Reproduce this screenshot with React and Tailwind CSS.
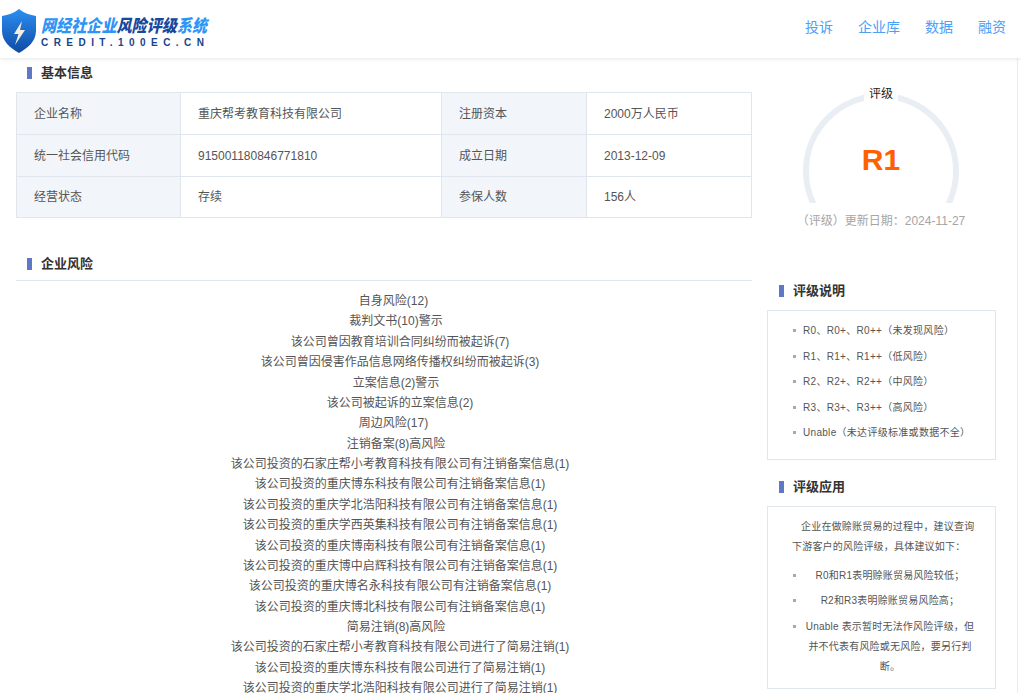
const FONT = "font-['Liberation_Sans','Noto_Sans_CJK_SC',sans-serif]";

const navLinks = ["投诉", "企业库", "数据", "融资"];

const basicInfo = [
  ["企业名称", "重庆帮考教育科技有限公司", "注册资本", "2000万人民币"],
  ["统一社会信用代码", "915001180846771810", "成立日期", "2013-12-09"],
  ["经营状态", "存续", "参保人数", "156人"],
];

const levelClass = ["pl-[19px]", "pl-[24px]", "pl-[32px]"];

const risks = [
  ["自身风险(12)", 0],
  ["裁判文书(10)警示", 1],
  ["该公司曾因教育培训合同纠纷而被起诉(7)", 2],
  ["该公司曾因侵害作品信息网络传播权纠纷而被起诉(3)", 2],
  ["立案信息(2)警示", 1],
  ["该公司被起诉的立案信息(2)", 2],
  ["周边风险(17)", 0],
  ["注销备案(8)高风险", 1],
  ["该公司投资的石家庄帮小考教育科技有限公司有注销备案信息(1)", 2],
  ["该公司投资的重庆博东科技有限公司有注销备案信息(1)", 2],
  ["该公司投资的重庆学北浩阳科技有限公司有注销备案信息(1)", 2],
  ["该公司投资的重庆学西英集科技有限公司有注销备案信息(1)", 2],
  ["该公司投资的重庆博南科技有限公司有注销备案信息(1)", 2],
  ["该公司投资的重庆博中启辉科技有限公司有注销备案信息(1)", 2],
  ["该公司投资的重庆博名永科技有限公司有注销备案信息(1)", 2],
  ["该公司投资的重庆博北科技有限公司有注销备案信息(1)", 2],
  ["简易注销(8)高风险", 1],
  ["该公司投资的石家庄帮小考教育科技有限公司进行了简易注销(1)", 2],
  ["该公司投资的重庆博东科技有限公司进行了简易注销(1)", 2],
  ["该公司投资的重庆学北浩阳科技有限公司进行了简易注销(1)", 2],
];

const grades = [
  "R0、R0+、R0++（未发现风险）",
  "R1、R1+、R1++（低风险）",
  "R2、R2+、R2++（中风险）",
  "R3、R3+、R3++（高风险）",
  "Unable（未达评级标准或数据不全）",
];

const SectionTitle = ({ children, className = "" }) => (
  <div className={`flex items-center gap-[9px] ${className}`}>
    <span className="w-[5px] h-[12px] bg-[#5f78c4]" />
    <h2 className="text-[13px] font-bold leading-[16px] text-[#333]">{children}</h2>
  </div>
);

const Logo = () => (
  <div className="mt-[9px] flex items-center gap-[4px]">
    <svg width="36" height="44" viewBox="0 0 36 44">
      <defs>
        <linearGradient id="shield" x1="0" y1="0" x2="0" y2="1">
          <stop offset="0" stopColor="#2b8ff0" />
          <stop offset="1" stopColor="#0f4aa5" />
        </linearGradient>
      </defs>
      <path d="M18 0 C23 4 29 6 35 7 V22 C35 32 27 39 18 44 C9 39 1 32 1 22 V7 C7 6 13 4 18 0 Z" fill="url(#shield)" />
      <path d="M21 12 L13 25 H17.5 L14 36 L24 21 H19 Z" fill="#f3eee0" />
    </svg>
    <div className="flex flex-col w-[170px] pt-[3px]">
      <div className="text-[15px] leading-[18px] font-black italic whitespace-nowrap tracking-[0.1px] scale-y-[1.15] text-[#2f95f5]">
        网经社企业<span className="text-[#17489c]">风险评级</span>系统
      </div>
      <div className="mt-[3px] text-[10px] leading-[10px] font-bold whitespace-nowrap tracking-[5.45px] text-[#17458c]">
        CREDIT.100EC.CN
      </div>
    </div>
  </div>
);

const Gauge = () => (
  <div className="flex flex-col items-center">
    <div className="relative w-[158px] h-[118px] overflow-hidden">
      <svg width="158" height="110" viewBox="0 0 158 110" className="absolute left-0 top-[8px]">
        <circle cx="79" cy="78" r="75" fill="none" stroke="#e9eef4" strokeWidth="6" />
      </svg>
      <span className="absolute left-1/2 top-[1px] -translate-x-1/2 bg-white px-[5px] text-[12px] leading-[17px] text-[#222]">
        评级
      </span>
      <span className="absolute left-0 right-0 top-[58px] text-center text-[30px] leading-[34px] font-bold text-[#ff6000]">
        R1
      </span>
    </div>
    <p className="mt-[10px] text-[12px] leading-[16px] text-[#a5a5a5] whitespace-nowrap">（评级）更新日期：2024-11-27</p>
  </div>
);

export default function App() {
  return (
    <div className={`h-[693px] overflow-hidden bg-white ${FONT}`}>
      <header className="h-[58px] flex items-start justify-between pl-[1px] pr-[15px] bg-white shadow-[0_1px_4px_rgba(0,0,0,0.1)] relative">
        <Logo />
        <nav className="mt-[17px] flex gap-[25px] text-[14px] leading-[20px] text-[#4ca0f5]">
          {navLinks.map((link) => (
            <a key={link} href="#">
              {link}
            </a>
          ))}
        </nav>
      </header>

      <main className="flex mr-[3px] h-[635px] border-r border-[#e9edf2]">
        <div className="w-[736px] ml-[16px] shrink-0">
          <SectionTitle className="mt-[7px] ml-[11px]">基本信息</SectionTitle>

          <table className="mt-[11px] w-full table-fixed border-collapse text-[12px] text-[#555]">
            <colgroup>
              <col className="w-[164px]" />
              <col className="w-[261px]" />
              <col className="w-[145px]" />
              <col />
            </colgroup>
            <tbody>
              {basicInfo.map(([l1, v1, l2, v2], i) => (
                <tr key={l1} className={i === 2 ? "h-[41px]" : "h-[42px]"}>
                  <td className="border border-[#dfe6ee] bg-[#f2f5f9] pl-[17px]">{l1}</td>
                  <td className="border border-[#dfe6ee] pl-[17px]">{v1}</td>
                  <td className="border border-[#dfe6ee] bg-[#f2f5f9] pl-[17px]">{l2}</td>
                  <td className="border border-[#dfe6ee] pl-[17px]">{v2}</td>
                </tr>
              ))}
            </tbody>
          </table>

          <div className="mt-[38px] pl-[11px] pb-[8px] border-b border-[#dfe6ee]">
            <SectionTitle>企业风险</SectionTitle>
          </div>

          <ul className="mt-[10px] text-center text-[12px] leading-[20.37px] text-[#555]">
            {risks.map(([risk, level], i) => (
              <li key={i} className={levelClass[level]}>
                {risk}
              </li>
            ))}
          </ul>
        </div>

        <aside className="ml-[15px] w-[229px] shrink-0">
          <div className="mt-[27px] ml-[-1px]">
            <Gauge />
          </div>

          <SectionTitle className="mt-[54px] ml-[12px]">评级说明</SectionTitle>
          <div className="mt-[11px] h-[150px] border border-[#dfe6ee] pt-[7px] pl-[35px]">
            <ul className="text-[10px] leading-[25.5px] tracking-[0.3px] text-[#555]">
              {grades.map((g) => (
                <li key={g} className="relative whitespace-nowrap">
                  <span className="absolute left-[-10px] top-[11px] w-[3px] h-[3px] bg-[#a9a9a9]" />
                  {g}
                </li>
              ))}
            </ul>
          </div>

          <SectionTitle className="mt-[19px] ml-[12px]">评级应用</SectionTitle>
          <div className="mt-[11px] h-[183px] border border-[#dfe6ee] pt-[10px] pl-[24px] pr-[20px] text-[10px] leading-[20.4px] text-[#555] tracking-[0.2px]">
            <p className="indent-[9px] whitespace-nowrap">企业在做赊账贸易的过程中，建议查询</p>
            <p className="whitespace-nowrap">下游客户的风险评级，具体建议如下：</p>
            <ul className="mt-[8px] text-center">
              <li className="relative pl-[13px] mb-[5px]">
                <span className="absolute left-[1px] top-[8px] w-[3px] h-[3px] bg-[#a9a9a9]" />
                R0和R1表明赊账贸易风险较低；
              </li>
              <li className="relative pl-[13px] mb-[5px]">
                <span className="absolute left-[1px] top-[8px] w-[3px] h-[3px] bg-[#a9a9a9]" />
                R2和R3表明赊账贸易风险高；
              </li>
              <li className="relative pl-[13px]">
                <span className="absolute left-[1px] top-[8px] w-[3px] h-[3px] bg-[#a9a9a9]" />
                Unable 表示暂时无法作风险评级，但并不代表有风险或无风险，要另行判断。
              </li>
            </ul>
          </div>
        </aside>
      </main>
    </div>
  );
}
